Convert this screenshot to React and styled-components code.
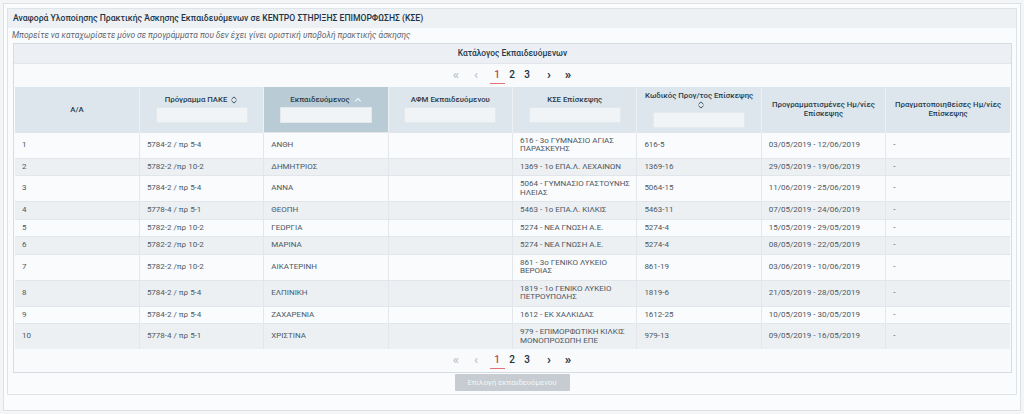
import React from 'react';
import styled, { createGlobalStyle } from 'styled-components';

const GlobalStyle = createGlobalStyle`
	html, body {
		margin: 0;
		padding: 0;
		background: #f3f5f7;
		font-family: Roboto, "Noto Sans", "DejaVu Sans", sans-serif;
	}
`;

const rows = [
	{ aa: '1', prog: '5784-2 / πρ 5-4', name: 'ΑΝΘΗ', kse: '616 - 3ο ΓΥΜΝΑΣΙΟ ΑΓΙΑΣ ΠΑΡΑΣΚΕΥΗΣ', code: '616-5', planned: '03/05/2019 - 12/06/2019' },
	{ aa: '2', prog: '5782-2 /πρ 10-2', name: 'ΔΗΜΗΤΡΙΟΣ', kse: '1369 - 1ο ΕΠΑ.Λ. ΛΕΧΑΙΝΩΝ', code: '1369-16', planned: '29/05/2019 - 19/06/2019' },
	{ aa: '3', prog: '5784-2 / πρ 5-4', name: 'ΑΝΝΑ', kse: '5064 - ΓΥΜΝΑΣΙΟ ΓΑΣΤΟΥΝΗΣ ΗΛΕΙΑΣ', code: '5064-15', planned: '11/06/2019 - 25/06/2019' },
	{ aa: '4', prog: '5778-4 / πρ 5-1', name: 'ΘΕΟΠΗ', kse: '5463 - 1ο ΕΠΑ.Λ. ΚΙΛΚΙΣ', code: '5463-11', planned: '07/05/2019 - 24/06/2019' },
	{ aa: '5', prog: '5782-2 /πρ 10-2', name: 'ΓΕΩΡΓΙΑ', kse: '5274 - ΝΕΑ ΓΝΩΣΗ Α.Ε.', code: '5274-4', planned: '15/05/2019 - 29/05/2019' },
	{ aa: '6', prog: '5782-2 /πρ 10-2', name: 'ΜΑΡΙΝΑ', kse: '5274 - ΝΕΑ ΓΝΩΣΗ Α.Ε.', code: '5274-4', planned: '08/05/2019 - 22/05/2019' },
	{ aa: '7', prog: '5782-2 /πρ 10-2', name: 'ΑΙΚΑΤΕΡΙΝΗ', kse: '861 - 3ο ΓΕΝΙΚΟ ΛΥΚΕΙΟ ΒΕΡΟΙΑΣ', code: '861-19', planned: '03/06/2019 - 10/06/2019' },
	{ aa: '8', prog: '5784-2 / πρ 5-4', name: 'ΕΛΠΙΝΙΚΗ', kse: '1819 - 1ο ΓΕΝΙΚΟ ΛΥΚΕΙΟ ΠΕΤΡΟΥΠΟΛΗΣ', code: '1819-6', planned: '21/05/2019 - 28/05/2019' },
	{ aa: '9', prog: '5784-2 / πρ 5-4', name: 'ΖΑΧΑΡΕΝΙΑ', kse: '1612 - ΕΚ ΧΑΛΚΙΔΑΣ', code: '1612-25', planned: '10/05/2019 - 30/05/2019' },
	{ aa: '10', prog: '5778-4 / πρ 5-1', name: 'ΧΡΙΣΤΙΝΑ', kse: '979 - ΕΠΙΜΟΡΦΩΤΙΚΗ ΚΙΛΚΙΣ ΜΟΝΟΠΡΟΣΩΠΗ ΕΠΕ', code: '979-13', planned: '09/05/2019 - 16/05/2019' },
];

const SortBoth = () => (
	<svg width="8" height="8" viewBox="0 0 8 8" fill="none" stroke="#3d5366" strokeWidth="1" style={{ verticalAlign: 'middle', marginLeft: 3 }}>
		<path d="M1.5 3.3 L4 0.9 L6.5 3.3" />
		<path d="M1.5 4.7 L4 7.1 L6.5 4.7" />
	</svg>
);

const SortUp = () => (
	<svg width="8" height="6" viewBox="0 0 8 6" fill="none" stroke="#f2f6f8" strokeWidth="1.2" style={{ verticalAlign: 'middle', marginLeft: 4 }}>
		<path d="M1.2 4.4 L4 1.6 L6.8 4.4" />
	</svg>
);

const Pager = () => (
	<PagerBar>
		<PageLink $muted $after={5}>«</PageLink>
		<PageLink $muted $after={6}>‹</PageLink>
		<PageLink $current>1</PageLink>
		<PageLink>2</PageLink>
		<PageLink>3</PageLink>
		<PageLink $arrow $before={7}>›</PageLink>
		<PageLink $arrow $before={4}>»</PageLink>
	</PagerBar>
);

export default function App() {
	return (
		<>
			<GlobalStyle />
			<Outer>
				<Inner>
					<TitleBar>Αναφορά Υλοποίησης Πρακτικής Άσκησης Εκπαιδευόμενων σε ΚΕΝΤΡΟ ΣΤΗΡΙΞΗΣ ΕΠΙΜΟΡΦΩΣΗΣ (ΚΣΕ)</TitleBar>
					<Hint>Μπορείτε να καταχωρίσετε μόνο σε προγράμματα που δεν έχει γίνει οριστική υποβολή πρακτικής άσκησης</Hint>
					<Panel>
						<PanelHeader>Κατάλογος Εκπαιδευόμενων</PanelHeader>
						<Pager />
						<Table>
							<thead>
								<tr>
									<Th>Α/Α</Th>
									<Th>
										<HeadLabel>Πρόγραμμα ΠΑΚΕ<SortBoth /></HeadLabel>
										<Filter />
									</Th>
									<Th $sorted>
										<HeadLabel>Εκπαιδευόμενος<SortUp /></HeadLabel>
										<Filter />
									</Th>
									<Th>
										<HeadLabel>ΑΦΜ Εκπαιδευόμενου</HeadLabel>
										<Filter />
									</Th>
									<Th>
										<HeadLabel>ΚΣΕ Επίσκεψης</HeadLabel>
										<Filter />
									</Th>
									<Th>
										<HeadLabel>Κωδικός Προγ/τος Επίσκεψης<br /><SortBoth /></HeadLabel>
										<Filter />
									</Th>
									<Th>Προγραμματισμένες Ημ/νίες Επίσκεψης</Th>
									<Th>Πραγματοποιηθείσες Ημ/νίες Επίσκεψης</Th>
								</tr>
							</thead>
							<tbody>
								{rows.map((r, i) => (
									<Tr key={r.aa} $alt={i % 2 === 1}>
										<Td>{r.aa}</Td>
										<Td>{r.prog}</Td>
										<Td>{r.name}</Td>
										<Td></Td>
										<Td>{r.kse}</Td>
										<Td>{r.code}</Td>
										<Td>{r.planned}</Td>
										<Td>-</Td>
									</Tr>
								))}
							</tbody>
						</Table>
						<Pager />
					</Panel>
					<Actions>
						<Button disabled>Επιλογή εκπαιδευόμενου</Button>
					</Actions>
				</Inner>
			</Outer>
		</>
	);
}

const Outer = styled.div`
	margin: 3px;
	height: 408px;
	box-sizing: border-box;
	border: 1px solid #dde2e6;
	background: #fbfcfd;
	padding: 4px 3px 0 3px;
`;
const Inner = styled.div`
	border: 1px solid #dfe4e8;
	background: #fafbfd;
	height: 387px;
	box-sizing: border-box;
	display: flex;
	flex-direction: column;
`;
const TitleBar = styled.div`
	height: 19px;
	line-height: 19px;
	background: #eef1f4;
	padding-left: 5px;
	font-size: 8.6px;
	font-weight: 500;
	color: #1d3447;
	white-space: nowrap;
`;
const Hint = styled.div`
	height: 14px;
	line-height: 14px;
	padding-left: 4px;
	font-size: 8.4px;
	font-style: italic;
	color: #5d6770;
	white-space: nowrap;
`;
const Panel = styled.div`
	margin: 1px 4px 0 5px;
	border: 1px solid #d6dce1;
	background: #f8fafc;
	padding: 0 2px 0 1px;
`;
const PanelHeader = styled.div`
	margin: 0 -2px 0 -1px;
	height: 19px;
	line-height: 19px;
	background: #eceff3;
	border-bottom: 1px solid #e3e7eb;
	text-align: center;
	font-size: 8.4px;
	font-weight: 500;
	color: #26394a;
`;
const PagerBar = styled.div`
	height: 23px;
	display: flex;
	justify-content: center;
	align-items: center;
`;
const PageLink = styled.span`
	display: inline-block;
	width: 15px;
	text-align: center;
	margin-left: ${(p) => p.$before || 0}px;
	margin-right: ${(p) => p.$after || 0}px;
	font-size: ${(p) => (p.$arrow || p.$muted ? '13px' : '10px')};
	font-weight: ${(p) => (p.$arrow ? 700 : 500)};
	color: ${(p) => (p.$muted ? '#b9c3cc' : p.$current ? '#c8414b' : '#1f3142')};
	line-height: 13px;
	padding-bottom: 2px;
	border-bottom: 1px solid ${(p) => (p.$current ? '#e0727a' : 'transparent')};
`;
const Table = styled.table`
	width: 995px;
	table-layout: fixed;
	border-collapse: collapse;
	font-size: 8px;
`;
const Th = styled.th`
	height: 45px;
	padding: 0 4px;
	box-sizing: border-box;
	background: ${(p) => (p.$sorted ? '#b9ccd5' : '#dde6ec')};
	border-left: 1px solid #ecf0f3;
	color: #2a3d4e;
	font-weight: 500;
	font-size: 7.8px;
	line-height: 9px;
	text-align: center;
	vertical-align: middle;
	&:first-child {
		border-left: none;
	}
`;
const HeadLabel = styled.div`
	white-space: nowrap;
`;
const Filter = styled.div`
	margin: 3px auto 0;
	width: 92px;
	height: 16px;
	background: #f1f4f6;
	border: 1px solid #e4e9ec;
	box-sizing: border-box;
`;
const Tr = styled.tr`
	background: ${(p) => (p.$alt ? '#edf0f3' : '#fafbfc')};
	border-top: 1px solid #e2e6ea;
`;
const Td = styled.td`
	padding: 4px 6px 4px 7px;
	line-height: 8.5px;
	color: #4c5864;
	border-left: 1px solid #e3e7eb;
	vertical-align: middle;
	&:first-child {
		border-left: none;
	}
`;
const Actions = styled.div`
	display: flex;
	justify-content: center;
	padding-top: 1px;
`;
const Button = styled.button`
	width: 115px;
	height: 17px;
	border: none;
	border-radius: 1px;
	background: #c6ccd1;
	color: #f4f6f7;
	font-family: inherit;
	font-size: 7.8px;
	padding: 0;
`;
